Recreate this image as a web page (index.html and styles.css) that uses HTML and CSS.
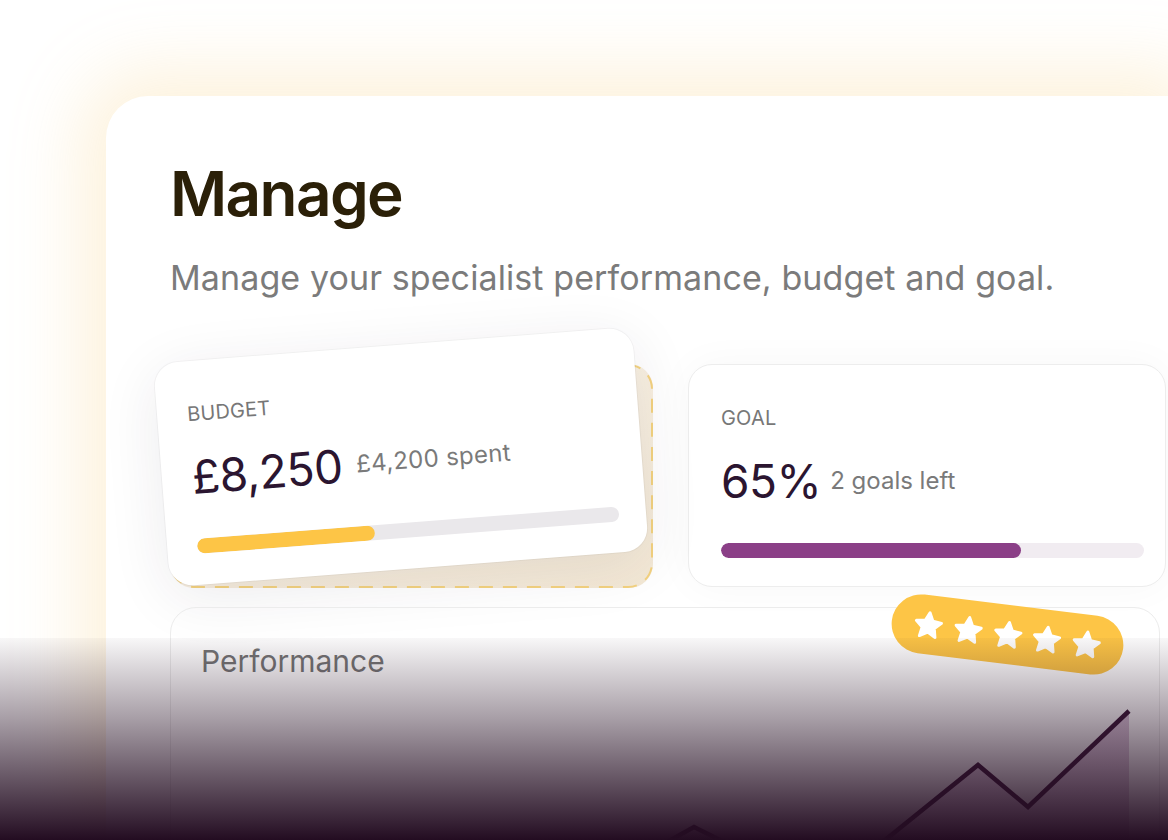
FILE: index.html
```html
<!DOCTYPE html>
<html lang="en">
<head>
<meta charset="utf-8">
<title>Manage</title>
<link rel="stylesheet" href="styles.css">
</head>
<body>
<div class="stage">
  <section class="panel">
    <h1 class="title">Manage</h1>
    <p class="subtitle">Manage your specialist performance, budget and goal.</p>

    <div class="cards">
      <div class="slot">
        <svg class="slot-outline" viewBox="0 0 483 223" preserveAspectRatio="none" aria-hidden="true">
          <rect x="1" y="1" width="481" height="221" rx="24" ry="24"/>
        </svg>
        <div class="card card-budget">
          <div class="label">BUDGET</div>
          <div class="value-row value-row-wide">
            <span class="value">£8,250</span>
            <span class="note">£4,200 spent</span>
          </div>
          <div class="bar bar-grey"><div class="fill fill-yellow" style="width:42%"></div></div>
        </div>
      </div>

      <div class="card card-goal">
        <div class="label">GOAL</div>
        <div class="value-row">
          <span class="value">65%</span>
          <span class="note">2 goals left</span>
        </div>
        <div class="bar bar-lilac"><div class="fill fill-purple" style="width:71%"></div></div>
      </div>
    </div>

    <div class="perf">
      <h2 class="perf-title">Performance</h2>
      <svg class="chart" width="990" height="200" viewBox="0 0 990 200" aria-hidden="true">
        <defs>
          <linearGradient id="area" x1="0" y1="0" x2="0" y2="1">
            <stop offset="0" stop-color="#9a5c97" stop-opacity="0.35"/>
            <stop offset="1" stop-color="#9a5c97" stop-opacity="0.15"/>
          </linearGradient>
        </defs>
        <polygon class="chart-area" points="0,220 210,190 430,200 523,148 651,212 807,86 857,128 958,32 958,300 0,300"/>
        <polyline class="chart-line" points="0,220 210,190 430,200 523,148 651,212 807,86 857,128 958,32"/>
      </svg>
      <div class="rating">
        <svg class="star" viewBox="0 0 24 24"><polygon points="12,2.5 14.9,8.6 21.5,9.4 16.6,13.9 17.9,20.5 12,17.2 6.1,20.5 7.4,13.9 2.5,9.4 9.1,8.6"/></svg>
        <svg class="star" viewBox="0 0 24 24"><polygon points="12,2.5 14.9,8.6 21.5,9.4 16.6,13.9 17.9,20.5 12,17.2 6.1,20.5 7.4,13.9 2.5,9.4 9.1,8.6"/></svg>
        <svg class="star" viewBox="0 0 24 24"><polygon points="12,2.5 14.9,8.6 21.5,9.4 16.6,13.9 17.9,20.5 12,17.2 6.1,20.5 7.4,13.9 2.5,9.4 9.1,8.6"/></svg>
        <svg class="star" viewBox="0 0 24 24"><polygon points="12,2.5 14.9,8.6 21.5,9.4 16.6,13.9 17.9,20.5 12,17.2 6.1,20.5 7.4,13.9 2.5,9.4 9.1,8.6"/></svg>
        <svg class="star" viewBox="0 0 24 24"><polygon points="12,2.5 14.9,8.6 21.5,9.4 16.6,13.9 17.9,20.5 12,17.2 6.1,20.5 7.4,13.9 2.5,9.4 9.1,8.6"/></svg>
      </div>
    </div>
  </section>
</div>
<div class="fade" aria-hidden="true"></div>
</body>
</html>
```

FILE: styles.css
```css
html, body {
  margin: 0;
  padding: 0;
  width: 1168px;
  height: 840px;
  overflow: hidden;
  background: #ffffff;
}

body {
  position: relative;
  font-family: Inter, "Liberation Sans", Arial, sans-serif;
  -webkit-font-smoothing: antialiased;
}

.stage {
  padding: 96px 0 0 106px;
}

.panel {
  box-sizing: border-box;
  width: 1062px;
  height: 744px;
  overflow: hidden;
  background: #ffffff;
  border-radius: 42px 0 0 0;
  box-shadow: 0 0 70px 26px rgba(253, 240, 214, 0.85);
  padding: 67px 0 0 64px;
}

.title {
  margin: 0;
  font-size: 62px;
  line-height: 62px;
  font-weight: 600;
  letter-spacing: -1.6px;
  color: #2b2008;
}

.subtitle {
  margin: 33px 0 0;
  font-size: 34px;
  line-height: 40px;
  font-weight: 400;
  letter-spacing: 0.1px;
  color: #7b7b7b;
}

.cards {
  display: grid;
  grid-template-columns: 483px 478px;
  column-gap: 35px;
  height: 223px;
  margin-top: 66px;
}

.slot {
  position: relative;
  display: flex;
  align-items: center;
  justify-content: center;
  border-radius: 24px;
  background: linear-gradient(160deg, #fbf5ea 0%, #f3e8d5 100%);
}

.slot-outline {
  position: absolute;
  inset: 0;
  width: 100%;
  height: 100%;
  overflow: visible;
}

.slot-outline rect {
  fill: none;
  stroke: #f3d27f;
  stroke-width: 2;
  stroke-dasharray: 14 10;
}

.card {
  box-sizing: border-box;
  background: #ffffff;
  border-radius: 24px;
}

.card-budget {
  position: relative;
  flex-shrink: 0;
  width: 480px;
  height: 224px;
  padding: 41px 30px 0;
  transform: translate(-11px, -19px) rotate(-4.4deg);
  box-shadow: 0 0 0 1px rgba(0, 0, 0, 0.035), 0 12px 60px rgba(40, 30, 50, 0.09);
}

.card-goal {
  height: 223px;
  padding: 41px 32px 0;
  border: 1.5px solid #ededed;
  box-shadow: 0 0 40px rgba(0, 0, 0, 0.035);
}

.label {
  font-size: 20px;
  line-height: 24px;
  color: #777777;
  letter-spacing: 0.2px;
}

.value-row {
  display: flex;
  align-items: center;
  gap: 9px;
  height: 52px;
  margin-top: 25px;
}

.value-row-wide {
  gap: 14px;
}

.value {
  font-size: 46px;
  line-height: 52px;
  color: #2b1530;
  letter-spacing: -0.5px;
}

.note {
  font-size: 24px;
  line-height: 28px;
  color: #7a7a7a;
}

.value-row-wide .note {
  letter-spacing: 0.3px;
}

.bar {
  width: 423px;
  height: 15px;
  margin-top: 36px;
  border-radius: 8px;
  overflow: hidden;
}

.bar-grey { background: #eae8eb; }
.bar-lilac { background: #f1ecf1; }

.fill {
  height: 100%;
  border-radius: 8px;
}

.fill-yellow { background: #fdc546; }
.fill-purple { background: #8b3f87; }

.perf {
  position: relative;
  box-sizing: border-box;
  width: 990px;
  height: 280px;
  margin-top: 20px;
  border: 1.5px solid #ececec;
  border-radius: 26px;
}

.perf-title {
  margin: 0;
  padding: 35px 0 0 30px;
  font-size: 30px;
  line-height: 36px;
  font-weight: 400;
  color: #747474;
}

.chart {
  display: block;
}

.chart-area {
  fill: url(#area);
}

.chart-line {
  fill: none;
  stroke: #3b1838;
  stroke-width: 4.5;
  stroke-linejoin: miter;
}

.rating {
  position: absolute;
  left: 720px;
  top: -3px;
  box-sizing: border-box;
  width: 233px;
  height: 59px;
  padding: 0 21px;
  display: flex;
  align-items: center;
  justify-content: space-between;
  background: #fdc546;
  border-radius: 30px;
  transform: rotate(7deg);
}

.star {
  width: 32px;
  height: 32px;
}

.star polygon {
  fill: #ffffff;
  stroke: #ffffff;
  stroke-width: 2.2;
  stroke-linejoin: round;
}

.fade {
  position: absolute;
  left: 0;
  right: 0;
  bottom: 0;
  height: 202px;
  background: linear-gradient(to bottom, rgba(35, 12, 33, 0.03) 0%, rgba(35, 12, 33, 0.4) 40%, rgba(35, 12, 33, 0.8) 80%, rgba(35, 12, 33, 1) 100%);
  pointer-events: none;
}
```
